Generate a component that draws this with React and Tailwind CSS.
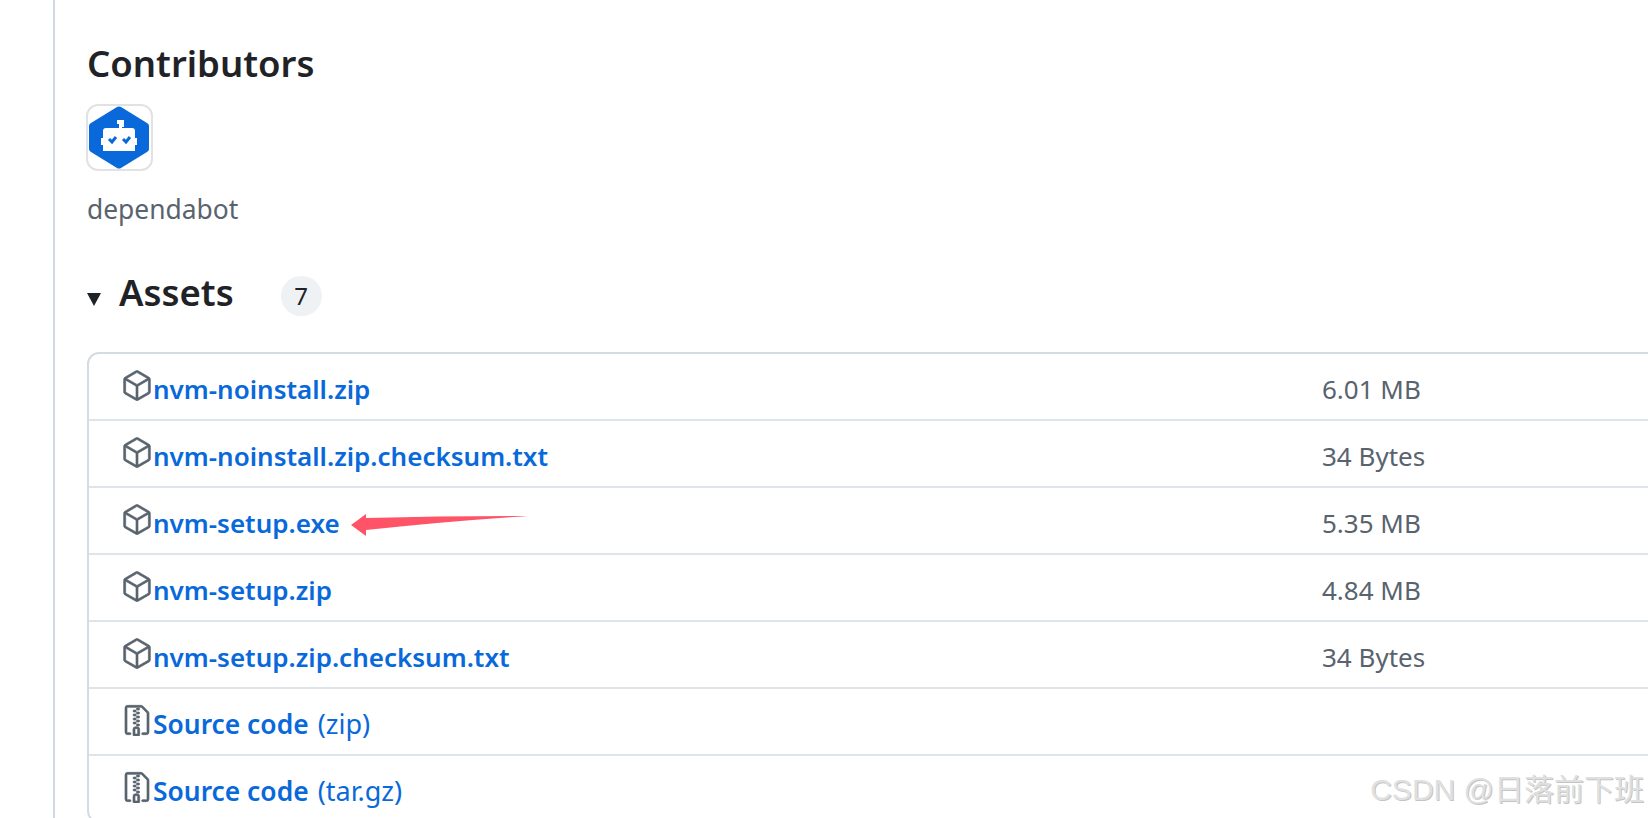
import React from 'react';
import { GoPackage, GoFileZip } from 'react-icons/go';

const assets = [
  { name: 'nvm-noinstall.zip', size: '6.01 MB' },
  { name: 'nvm-noinstall.zip.checksum.txt', size: '34 Bytes' },
  { name: 'nvm-setup.exe', size: '5.35 MB' },
  { name: 'nvm-setup.zip', size: '4.84 MB' },
  { name: 'nvm-setup.zip.checksum.txt', size: '34 Bytes' },
  { name: 'Source code', suffix: '(zip)', source: true },
  { name: 'Source code', suffix: '(tar.gz)', source: true },
];

function DependabotLogo() {
  return (
    <svg viewBox="0 0 63 63" className="w-full h-full block">
      <path d="M29 1 Q31 0 33 1 L59 17 Q61 18 61 20 L61 43 Q61 45 59 46 L33 62 Q31 63 29 62 L3 46 Q1 45 1 43 L1 20 Q1 18 3 17 Z" fill="#0969da" />
      <path d="M29 14h7v7h-2v2h-3v-5h-2z" fill="#fff" />
      <path d="M15 25 Q15 22 18 22 L44 22 Q47 22 47 25 L47 32 L49 32 L49 39 L47 39 L47 45 L15 45 L15 39 L13 39 L13 32 L15 32 Z" fill="#fff" />
      <path d="M21 33l3 3 4-5M35 33l3 3 4-5" fill="none" stroke="#0969da" strokeWidth="3" />
    </svg>
  );
}

function AssetRow({ asset }) {
  const Icon = asset.source ? GoFileZip : GoPackage;
  return (
    <div className="h-[67px] first:h-[65px] pt-[2px] flex items-center border-t-2 first:border-t-0 border-[#dfe4ea] pl-8">
      <div className="w-[1201px] flex items-center shrink-0">
        <Icon size={32} stroke="currentColor" strokeWidth={0.5} className="text-[#59636e] shrink-0 -mt-1" />
        <span className={asset.source ? 'mt-1 text-[#0969da] text-[26.4px] font-semibold' : 'mt-1 text-[#0969da] text-[26px] font-semibold'}>
          {asset.name}
          {asset.suffix && <span className="ml-[2px] text-[27px] font-normal"> {asset.suffix}</span>}
        </span>
      </div>
      {asset.size && <span className="mt-1 text-[#59636e] text-[26px]">{asset.size}</span>}
    </div>
  );
}

export default function App() {
  return (
    <div className="relative w-[1648px] h-[818px] overflow-hidden bg-white font-['Noto_Sans','Noto_Sans_CJK_SC',sans-serif]">
      <div className="h-full ml-[53px] pl-8 border-l-2 border-[#cfd8e0]">
        <h2 className="pt-[38px] text-[#1f2328] text-[36.5px] leading-[50px] font-semibold">Contributors</h2>
        <div className="mt-[16px] -ml-px w-[67px] h-[67px] border-2 border-[#e0e2e4] rounded-[12px] overflow-hidden">
          <DependabotLogo />
        </div>
        <div className="mt-[19px] text-[#59636e] text-[26.4px] leading-[38px]">dependabot</div>

        <div className="mt-[42px] flex items-center h-[48px]">
          <span className="w-0 h-0 border-l-[7px] border-r-[7px] border-t-[13px] border-l-transparent border-r-transparent border-t-[#1f2328] mt-[10px]" />
          <h2 className="ml-[18px] -mt-1 text-[#1f2328] text-[36.5px] font-semibold">Assets</h2>
          <span className="ml-[47px] mt-1 w-[41px] h-[40px] rounded-full bg-[#eff2f5] text-[#1f2328] text-[24px] flex items-center justify-center">7</span>
        </div>

        <div className="mt-[34px] w-[1700px] border-2 border-[#d5dbe2] rounded-[12px]">
          {assets.map((asset, i) => (
            <AssetRow key={i} asset={asset} />
          ))}
        </div>
      </div>

      {/* red arrow annotation */}
      <svg className="absolute left-[349px] top-[512px]" width="180" height="24" viewBox="0 0 180 24">
        <path d="M2 13 L17 2 L17 6 Q100 4 179 4 Q100 9 17 18 L17 24 Z" fill="#ff5468" />
      </svg>

      {/* watermark */}
      <div className="absolute right-[4px] top-[772px] text-[30px] leading-[36px] text-[#e0e0e0] font-['Liberation_Sans','Noto_Sans_CJK_SC',sans-serif] [text-shadow:1px_1px_0_#c4c4c4]">CSDN @日落前下班</div>
    </div>
  );
}
